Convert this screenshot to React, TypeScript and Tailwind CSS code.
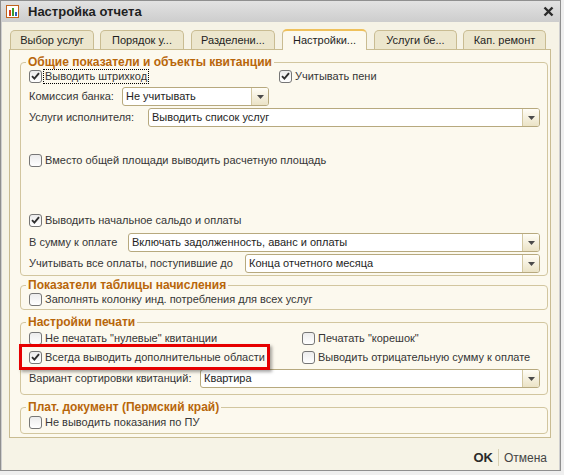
import React from 'react';
import clsx from 'clsx';

function Box({ checked }: { checked?: boolean }) {
  return (
    <span className="flex h-[13px] w-[13px] shrink-0 items-center justify-center rounded-[3px] border border-[#767676] bg-gradient-to-b from-[#ececec] to-white">
      {checked && (
        <svg width="9" height="8" viewBox="0 0 9 8">
          <path d="M1 4.2 L3.4 6.6 L8 1.2" fill="none" stroke="#2e2e2e" strokeWidth="1.9" />
        </svg>
      )}
    </span>
  );
}

function Check({ label, checked, focused }: { label: string; checked?: boolean; focused?: boolean }) {
  return (
    <div className="flex h-[14px] items-center">
      <Box checked={checked} />
      <span
        className={clsx(
          'ml-[1px] whitespace-nowrap px-[1px] leading-[13px]',
          focused ? 'border border-dotted border-black' : 'border border-transparent',
        )}
      >
        {label}
      </span>
    </div>
  );
}

function Select({ value, className }: { value: string; className?: string }) {
  return (
    <div className={clsx('flex h-[19px] items-stretch rounded-[3px] border border-[#b7a97e] bg-white', className)}>
      <span className="flex-1 truncate pl-[3px] leading-[17px] text-[#1e1e1e]">{value}</span>
      <span className="flex w-[17px] items-center justify-center rounded-r-[2px] border-l border-[#d3c8a2] bg-gradient-to-b from-[#fffdf6] to-[#ebe3c6]">
        <svg width="7" height="4" viewBox="0 0 7 4">
          <path d="M0 0h7L3.5 4z" fill="#4a4a4a" />
        </svg>
      </span>
    </div>
  );
}

function Field({ label, labelW, value, selectW }: { label: string; labelW: string; value: string; selectW?: string }) {
  return (
    <div className="flex items-center">
      <span className={clsx('shrink-0 whitespace-nowrap', labelW)}>{label}</span>
      <Select value={value} className={selectW ?? 'flex-1'} />
    </div>
  );
}

function Group({ title, className, children }: { title: string; className?: string; children: React.ReactNode }) {
  return (
    <fieldset className={clsx('rounded-[4px] border border-[#d2c69f] pl-[8px] pr-[7px]', className)}>
      <legend className="ml-[-3px] px-[2px] text-[12px] font-bold leading-[13px] text-[#b8660a]">{title}</legend>
      {children}
    </fieldset>
  );
}

const tabs = [
  { label: 'Выбор услуг', w: 'w-[84px]', ml: 'ml-0' },
  { label: 'Порядок у...', w: 'w-[84px]', ml: 'ml-[6px]' },
  { label: 'Разделени...', w: 'w-[84px]', ml: 'ml-[7px]' },
  { label: 'Настройки...', w: 'w-[85px]', ml: 'ml-[7px]', active: true },
  { label: 'Услуги бе...', w: 'w-[83px]', ml: 'ml-[7px]' },
  { label: 'Кап. ремонт', w: 'w-[83px]', ml: 'ml-[6px]' },
];

export default function App() {
  return (
    <div className="relative h-[475px] w-[564px] bg-[#efefef] font-['Liberation_Sans',Arial,sans-serif] text-[11px] text-[#363636]">
      <div className="flex h-[471px] w-[561px] flex-col border border-[#8f8f8f] bg-[#f6f3e6]">
        {/* title bar */}
        <div className="flex h-[21px] shrink-0 items-center bg-gradient-to-b from-[#e2e2e2] to-[#cdcdcd] pl-[5px] pr-[6px]">
          <svg width="13" height="13" viewBox="0 0 13 13">
            <rect x="0.5" y="0.5" width="12" height="12" fill="#fff" stroke="#c0631c" />
            <rect x="3" y="5" width="2" height="6" fill="#d83a1e" />
            <rect x="6" y="3" width="2" height="8" fill="#3a9a2c" />
            <rect x="9" y="7" width="2" height="4" fill="#2f5fbf" />
          </svg>
          <span className="ml-[9px] text-[13px] font-bold text-[#1f1f1f]">Настройка отчета</span>
          <svg className="ml-auto" width="11" height="11" viewBox="0 0 11 11">
            <path d="M1.5 1.5 L9.5 9.5 M9.5 1.5 L1.5 9.5" stroke="#2a2a2a" strokeWidth="2.4" />
          </svg>
        </div>

        {/* body */}
        <div className="flex flex-1 flex-col border-x border-[#cfcfcf] pl-[7px] pr-[8px] pt-[8px]">
          {/* tabs */}
          <div className="relative z-10 flex h-[19px] pl-[1px]">
            {tabs.map((t) => (
              <div
                key={t.label}
                className={clsx(
                  'flex items-center justify-center rounded-t-[5px] border-x whitespace-nowrap text-[#1e1e1e]',
                  t.w,
                  t.ml,
                  t.active
                    ? 'mt-[-1px] h-[21px] border-t-2 border-x-[#c9bc92] border-t-[#efc15c] bg-[#fcf9ee]'
                    : 'h-[19px] border-t border-[#c9bc92] bg-[#ece6cd]',
                )}
              >
                {t.label}
              </div>
            ))}
          </div>

          {/* panel */}
          <div className="flex h-[389px] flex-col border border-[#c9bc92] bg-[#fcf9ee] pl-[10px] pr-[2px] pt-[6px]">
            <Group title="Общие показатели и объекты квитанции" className="h-[220px]">
              <div className="flex">
                <div className="w-[250px]">
                  <Check label="Выводить штрихкод" checked focused />
                </div>
                <Check label="Учитывать пени" checked />
              </div>
              <div className="mt-[4px]">
                <Field label="Комиссия банка:" labelW="w-[93px]" value="Не учитывать" selectW="w-[147px]" />
              </div>
              <div className="mt-[2px]">
                <Field label="Услуги исполнителя:" labelW="w-[119px]" value="Выводить список услуг" />
              </div>
              <div className="mt-[26px]">
                <Check label="Вместо общей площади выводить расчетную площадь" />
              </div>
              <div className="mt-[46px]">
                <Check label="Выводить начальное сальдо и оплаты" checked />
              </div>
              <div className="mt-[6px]">
                <Field label="В сумму к оплате" labelW="w-[99px]" value="Включать задолженность, аванс и оплаты" />
              </div>
              <div className="mt-[2px]">
                <Field label="Учитывать все оплаты, поступившие до" labelW="w-[216px]" value="Конца отчетного месяца" />
              </div>
            </Group>

            <Group title="Показатели таблицы начисления" className="mt-[3px] pb-[3px]">
              <Check label="Заполнять колонку инд. потребления для всех услуг" />
            </Group>

            <Group title="Настройки печати" className="mt-[6px] pb-[6px]">
              <div className="mt-[2px] grid grid-cols-[273px_1fr] gap-y-[5px]">
                <Check label={'Не печатать "нулевые" квитанции'} />
                <Check label={'Печатать "корешок"'} />
                <Check label="Всегда выводить дополнительные области" checked />
                <Check label="Выводить отрицательную сумму к оплате" />
              </div>
              <div className="mt-[5px]">
                <Field label="Вариант сортировки квитанций:" labelW="w-[171px]" value="Квартира" />
              </div>
            </Group>

            <Group title="Плат. документ (Пермский край)" className="mt-[6px] pb-[4px]">
              <div className="mt-[1px]">
                <Check label="Не выводить показания по ПУ" />
              </div>
            </Group>
          </div>

          {/* footer */}
          <div className="flex flex-1 items-center justify-end pr-[4px] pt-[7px]">
            <span className="text-[13px] font-bold text-[#2a2a2a]">OK</span>
            <span className="mx-[5px] h-[17px] w-px bg-[#d8d0b4]" />
            <span className="text-[12px] text-[#444]">Отмена</span>
          </div>
        </div>
      </div>

      {/* red annotation frame */}
      <div className="absolute left-[19px] top-[344px] h-[26px] w-[251px] border-[3px] border-[#e60000] shadow-[2px_2px_3px_rgba(0,0,0,0.35)]" />
    </div>
  );
}
